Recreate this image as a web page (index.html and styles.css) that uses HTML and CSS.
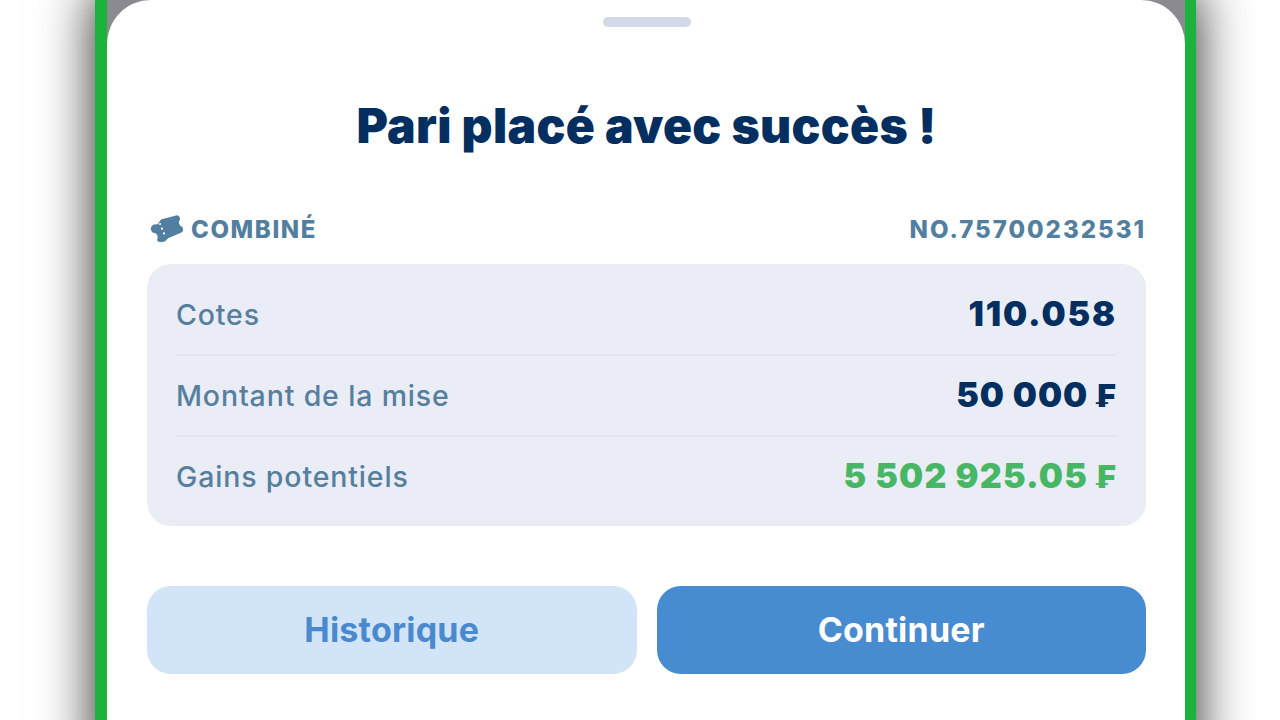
FILE: index.html
```html
<!DOCTYPE html>
<html lang="fr">
<head>
    <meta charset="UTF-8">
    <meta name="viewport" content="width=device-width, initial-scale=1.0">
    <title>Pari placé avec succès</title>
    <link rel="stylesheet" href="styles.css">
</head>
<body>
    <div class="phone">
        <main class="sheet">
            <div class="handle"></div>
            <h1 class="title">Pari placé avec succès !</h1>
            <div class="infos">
                <div class="type">
                    <svg class="ticket" width="34" height="28" viewBox="0 0 34 28">
                        <path fill="#527e9f" d="M11 4.500 L26 .4 Q28.500 -.2 29.500 2 L30.200 4 Q28.400 6.500 29.200 9 Q30 11.500 32.500 12 L33 14.500 Q33.300 16.800 31.500 17.500 L18 23.200 L16 25.500 Q14.500 27 11 27 Q7.500 27.500 7 25 Q8.500 21.500 6.500 19 Q5 17.500 2.500 17.500 Q.2 15 1 12.500 Q2 9.500 5 9.200 Q7.500 10.500 9.500 6.500 Z"/>
                        <g fill="#fff">
                            <circle cx="10" cy="9" r="1.100"/>
                            <circle cx="12" cy="13.700" r="1.100"/>
                            <circle cx="14" cy="18.400" r="1.100"/>
                        </g>
                    </svg>
                    <span class="type-nom">COMBINÉ</span>
                </div>
                <span class="numero">NO.75700232531</span>
            </div>
            <div class="details">
                <div class="ligne">
                    <span class="label">Cotes</span>
                    <span class="valeur cotes">110.058</span>
                </div>
                <div class="ligne">
                    <span class="label">Montant de la mise</span>
                    <span class="valeur">50 000 <span class="devise">₣</span></span>
                </div>
                <div class="ligne">
                    <span class="label">Gains potentiels</span>
                    <span class="valeur gains">5 502 925.05 <span class="devise">₣</span></span>
                </div>
            </div>
            <div class="boutons">
                <button class="btn btn-historique">Historique</button>
                <button class="btn btn-continuer">Continuer</button>
            </div>
        </main>
    </div>
</body>
</html>
```
FILE: styles.css
```css
* {
    box-sizing: border-box;
    margin: 0;
    padding: 0;
}
body {
    height: 720px;
    overflow: hidden;
    background-color: #fff;
    font-family: Inter, "Liberation Sans", sans-serif;
}
.phone {
    width: 1101px;
    height: 780px;
    margin-left: 95px;
    border: solid #1bb33b;
    border-width: 0 11px 0 12px;
    background-color: #8b8a90;
    box-shadow: 0 -10px 50px rgba(0, 0, 0, 0.85);
}
.sheet {
    display: flex;
    flex-direction: column;
    height: 100%;
    padding: 17px 39px 0 40px;
    border-radius: 44px 44px 0 0;
    background-color: #fff;
}
.handle {
    align-self: center;
    width: 88px;
    height: 10px;
    border-radius: 5px;
    background-color: #d3d9e7;
}
.title {
    margin-top: 69px;
    color: #032e60;
    font-size: 48px;
    font-weight: 900;
    line-height: 60px;
    letter-spacing: 0.33px;
    text-align: center;
    white-space: nowrap;
}
.infos {
    display: flex;
    justify-content: space-between;
    align-items: center;
    height: 30px;
    margin-top: 58px;
    color: #527e9f;
    font-size: 24px;
    font-weight: 800;
}
.type {
    display: flex;
    align-items: center;
    gap: 7px;
    padding-left: 3px;
}
.type-nom {
    letter-spacing: 1.6px;
}
.numero {
    letter-spacing: 2px;
}
.details {
    height: 262px;
    margin-top: 20px;
    padding: 11px 29px 9px;
    border-radius: 24px;
    background-color: #eaedf5;
}
.ligne {
    display: flex;
    justify-content: space-between;
    align-items: center;
    height: 81px;
    border-bottom: 2px solid #e0e5ed;
}
.ligne:last-child {
    height: 79px;
    border-bottom: none;
}
.label {
    color: #567f9e;
    font-size: 28.5px;
    font-weight: 500;
    letter-spacing: 0.85px;
}
.valeur {
    padding: 0 0 3px;
    color: #032e60;
    font-size: 34px;
    font-weight: 900;
    letter-spacing: 1px;
}
.cotes {
    letter-spacing: 1.9px;
}
.gains {
    color: #48b765;
    letter-spacing: 1.2px;
}
.devise {
    margin-right: 1px;
    font-size: 32px;
    letter-spacing: 0;
}
.boutons {
    display: flex;
    gap: 20px;
    margin-top: 60px;
}
.btn {
    flex: 1;
    height: 88px;
    padding-bottom: 2px;
    border: none;
    border-radius: 24px;
    font-family: inherit;
    font-size: 34px;
    font-weight: 700;
    letter-spacing: 0.2px;
}
.btn-historique {
    background-color: #d1e4f8;
    color: #4a89cd;
}
.btn-continuer {
    background-color: #478bd1;
    color: #fff;
}
```
